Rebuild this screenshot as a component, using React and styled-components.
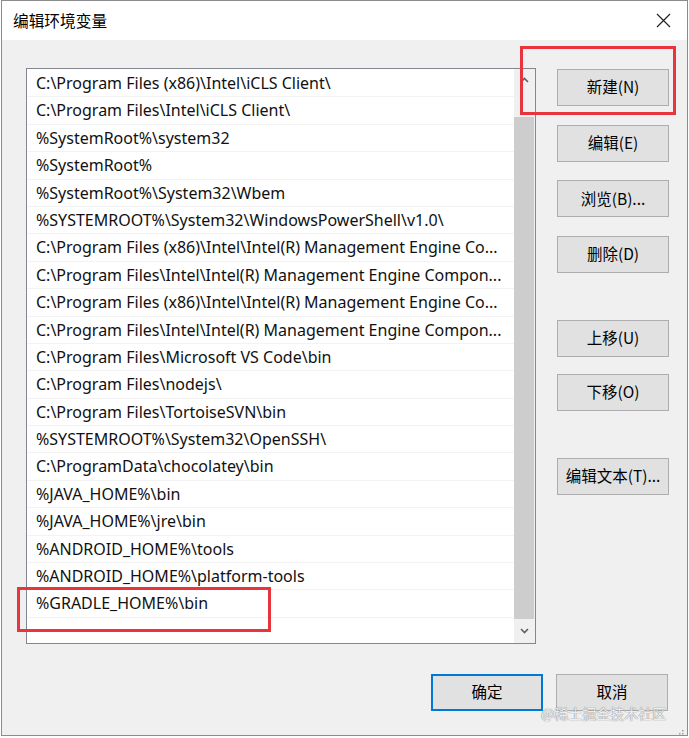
import React from 'react';
import styled, { createGlobalStyle } from 'styled-components';

const GlobalStyle = createGlobalStyle`
  html, body {
    margin: 0;
    padding: 0;
    background: #ffffff;
  }
  * {
    box-sizing: border-box;
  }
`;

const paths = [
  'C:\\Program Files (x86)\\Intel\\iCLS Client\\',
  'C:\\Program Files\\Intel\\iCLS Client\\',
  '%SystemRoot%\\system32',
  '%SystemRoot%',
  '%SystemRoot%\\System32\\Wbem',
  '%SYSTEMROOT%\\System32\\WindowsPowerShell\\v1.0\\',
  'C:\\Program Files (x86)\\Intel\\Intel(R) Management Engine Co...',
  'C:\\Program Files\\Intel\\Intel(R) Management Engine Compon...',
  'C:\\Program Files (x86)\\Intel\\Intel(R) Management Engine Co...',
  'C:\\Program Files\\Intel\\Intel(R) Management Engine Compon...',
  'C:\\Program Files\\Microsoft VS Code\\bin',
  'C:\\Program Files\\nodejs\\',
  'C:\\Program Files\\TortoiseSVN\\bin',
  '%SYSTEMROOT%\\System32\\OpenSSH\\',
  'C:\\ProgramData\\chocolatey\\bin',
  '%JAVA_HOME%\\bin',
  '%JAVA_HOME%\\jre\\bin',
  '%ANDROID_HOME%\\tools',
  '%ANDROID_HOME%\\platform-tools',
  '%GRADLE_HOME%\\bin',
];

const buttonGroups = [
  ['新建(N)', '编辑(E)', '浏览(B)...', '删除(D)'],
  ['上移(U)', '下移(O)'],
  ['编辑文本(T)...'],
];

const Window = styled.div`
  position: relative;
  margin-left: 1px;
  width: 687px;
  height: 736px;
  border: 1px solid #8c8c8c;
  display: flex;
  flex-direction: column;
  font-family: 'Noto Sans', 'Noto Sans CJK SC', sans-serif;
  color: #000;
`;

const TitleBar = styled.div`
  height: 39px;
  background: #ffffff;
  display: flex;
  align-items: center;
  justify-content: space-between;
  padding: 0 16px 0 11px;
`;

const Title = styled.span`
  font-family: 'Noto Sans CJK SC', sans-serif;
  font-size: 15.7px;
  color: #000;
`;

const CloseButton = styled.div`
  width: 16px;
  height: 16px;
  display: flex;
  align-items: center;
  justify-content: center;
`;

const Body = styled.div`
  flex: 1;
  background: #f0f0f0;
  padding: 28px 18px 23px 24px;
  display: flex;
  flex-direction: column;
`;

const MainRow = styled.div`
  display: flex;
  gap: 21px;
`;

const ListBox = styled.div`
  width: 510px;
  height: 576px;
  border: 1px solid #828790;
  background: #ffffff;
  display: flex;
`;

const Rows = styled.div`
  flex: 1;
  padding-top: 1px;
  overflow: hidden;
`;

const Row = styled.div`
  height: 27.4px;
  line-height: 26px;
  padding-left: 9px;
  font-size: 16px;
  white-space: nowrap;
  overflow: hidden;
  border-bottom: 1px solid #f3f3f3;
  color: #111;
`;

const ScrollBar = styled.div`
  width: 21px;
  background: #f0f0f0;
  display: flex;
  flex-direction: column;
  align-items: flex-start;
`;

const Arrow = styled.div`
  width: 21px;
  height: ${(p) => p.$h}px;
  display: flex;
  align-items: center;
  justify-content: center;
`;

const Track = styled.div`
  flex: 1;
  width: 20px;
  display: flex;
  flex-direction: column;
  justify-content: flex-end;
`;

const Thumb = styled.div`
  height: 502px;
  background: #cdcdcd;
`;

const ButtonColumn = styled.div`
  padding-top: 1px;
  display: flex;
  flex-direction: column;
  gap: 47px;
`;

const ButtonGroup = styled.div`
  display: flex;
  flex-direction: column;
  gap: ${(p) => p.$gap}px;
`;

const DialogButton = styled.div`
  width: 112px;
  height: 37px;
  padding-bottom: 1px;
  background: #e1e1e1;
  border: ${(p) => (p.$default ? '2px solid #0078d7' : '1px solid #adadad')};
  display: flex;
  align-items: center;
  justify-content: center;
  font-family: 'Noto Sans CJK SC', sans-serif;
  font-size: 15.5px;
  line-height: 1;
  color: #000;
`;

const Footer = styled.div`
  margin-top: 30px;
  display: flex;
  justify-content: flex-end;
  gap: 13px;
  padding-right: 1px;
`;

const Annotation = styled.div`
  position: absolute;
  border: 3px solid #e8353d;
  left: ${(p) => p.$x}px;
  top: ${(p) => p.$y}px;
  width: ${(p) => p.$w}px;
  height: ${(p) => p.$h}px;
  pointer-events: none;
`;

const Watermark = styled.div`
  position: absolute;
  left: 539px;
  top: 705px;
  font-family: 'Noto Sans CJK SC', sans-serif;
  font-size: 14px;
  line-height: 14px;
  color: rgba(255, 255, 255, 0.85);
  text-shadow: 0 0 1px #8a8a8a, 0 0 1px #8a8a8a;
  white-space: nowrap;
`;

const Grip = styled.div`
  position: absolute;
  right: 2px;
  bottom: 3px;
  width: 10px;
  height: 10px;
`;

const Chevron = ({ up }) => (
  <svg width="9" height="6" viewBox="0 0 9 6">
    <path
      d={up ? 'M1 5 L4.5 1.5 L8 5' : 'M1 1 L4.5 4.5 L8 1'}
      fill="none"
      stroke="#606060"
      strokeWidth="1.6"
    />
  </svg>
);

const App = () => {
  return (
    <React.Fragment>
      <GlobalStyle />
      <Window>
        <TitleBar>
          <Title>编辑环境变量</Title>
          <CloseButton>
            <svg width="15" height="15" viewBox="0 0 15 15">
              <path d="M1 1 L14 14 M14 1 L1 14" stroke="#222" strokeWidth="1.2" />
            </svg>
          </CloseButton>
        </TitleBar>
        <Body>
          <MainRow>
            <ListBox>
              <Rows>
                {paths.map((p, i) => (
                  <Row key={i}>{p}</Row>
                ))}
              </Rows>
              <ScrollBar>
                <Arrow $h={22}>
                  <Chevron up />
                </Arrow>
                <Track>
                  <Thumb />
                </Track>
                <Arrow $h={24}>
                  <Chevron />
                </Arrow>
              </ScrollBar>
            </ListBox>
            <ButtonColumn>
              {buttonGroups.map((group, gi) => (
                <ButtonGroup key={gi} $gap={gi === 1 ? 17 : 18.7}>
                  {group.map((label) => (
                    <DialogButton key={label}>{label}</DialogButton>
                  ))}
                </ButtonGroup>
              ))}
            </ButtonColumn>
          </MainRow>
          <Footer>
            <DialogButton $default>确定</DialogButton>
            <DialogButton>取消</DialogButton>
          </Footer>
        </Body>
        <Annotation $x={518} $y={45} $w={156} $h={69} />
        <Annotation $x={15} $y={586} $w={254} $h={45} />
        <Watermark>@稀土掘金技术社区</Watermark>
        <Grip>
          <svg width="10" height="10" viewBox="0 0 10 10">
            {[[8, 2], [8, 5], [8, 8], [5, 5], [5, 8], [2, 8]].map(([x, y], i) => (
              <rect key={i} x={x - 1} y={y - 1} width="1.5" height="1.5" fill="#a0a0a0" />
            ))}
          </svg>
        </Grip>
      </Window>
    </React.Fragment>
  );
};

export default App;
